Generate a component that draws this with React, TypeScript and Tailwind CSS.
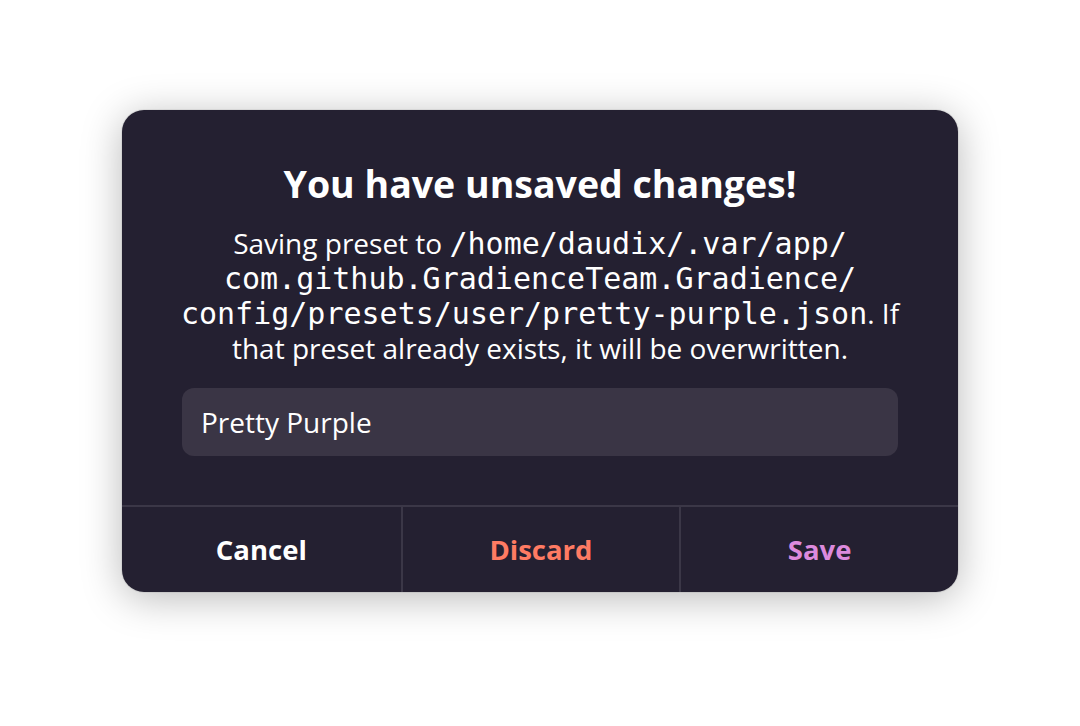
const SANS = "font-['Open_Sans','Noto_Sans',sans-serif]";
const MONO = "font-['DejaVu_Sans_Mono','Liberation_Mono',monospace]";

export default function App() {
  return (
    <div className={`min-h-screen w-full bg-white flex justify-center pt-[110px] ${SANS}`}>
      <div className="w-[836px] h-[482px] rounded-[22px] bg-[#242031] shadow-[0_6px_40px_rgba(0,0,0,0.28),0_0_0_1px_rgba(0,0,0,0.06)] flex flex-col overflow-hidden">
        {/* Body */}
        <div className="flex-1 flex flex-col items-center px-[60px] pt-[52px]">
          <h1 className="text-[37.5px] leading-[44px] font-bold text-white">
            You have unsaved changes!
          </h1>
          <p className="mt-[20px] text-center whitespace-nowrap text-[28px] leading-[35px] text-white">
            Saving preset to{" "}
            <span className={`${MONO} text-[30px]`}>/home/daudix/.var/app/</span>
            <br />
            <span className={`${MONO} text-[30px]`}>com.github.GradienceTeam.Gradience/</span>
            <br />
            <span className={`${MONO} text-[30px]`}>config/presets/user/pretty-purple.json</span>. If
            <br />
            that preset already exists, it will be overwritten.
          </p>
          <div className="mt-[22px] w-full h-[68px] rounded-[12px] bg-[#3a3545] flex items-center px-[19px]">
            <span className="text-[28px] text-white">Pretty Purple</span>
          </div>
        </div>

        {/* Actions */}
        <div className="h-[87px] border-t-2 border-[#3b3747] grid grid-cols-3">
          <button className="flex items-center justify-center text-[27.5px] font-bold text-white">
            Cancel
          </button>
          <button className="flex items-center justify-center border-l-2 border-[#3b3747] text-[27.5px] font-bold text-[#ff7b63]">
            Discard
          </button>
          <button className="flex items-center justify-center border-l-2 border-[#3b3747] text-[27.5px] font-bold text-[#dc8add]">
            Save
          </button>
        </div>
      </div>
    </div>
  );
}
